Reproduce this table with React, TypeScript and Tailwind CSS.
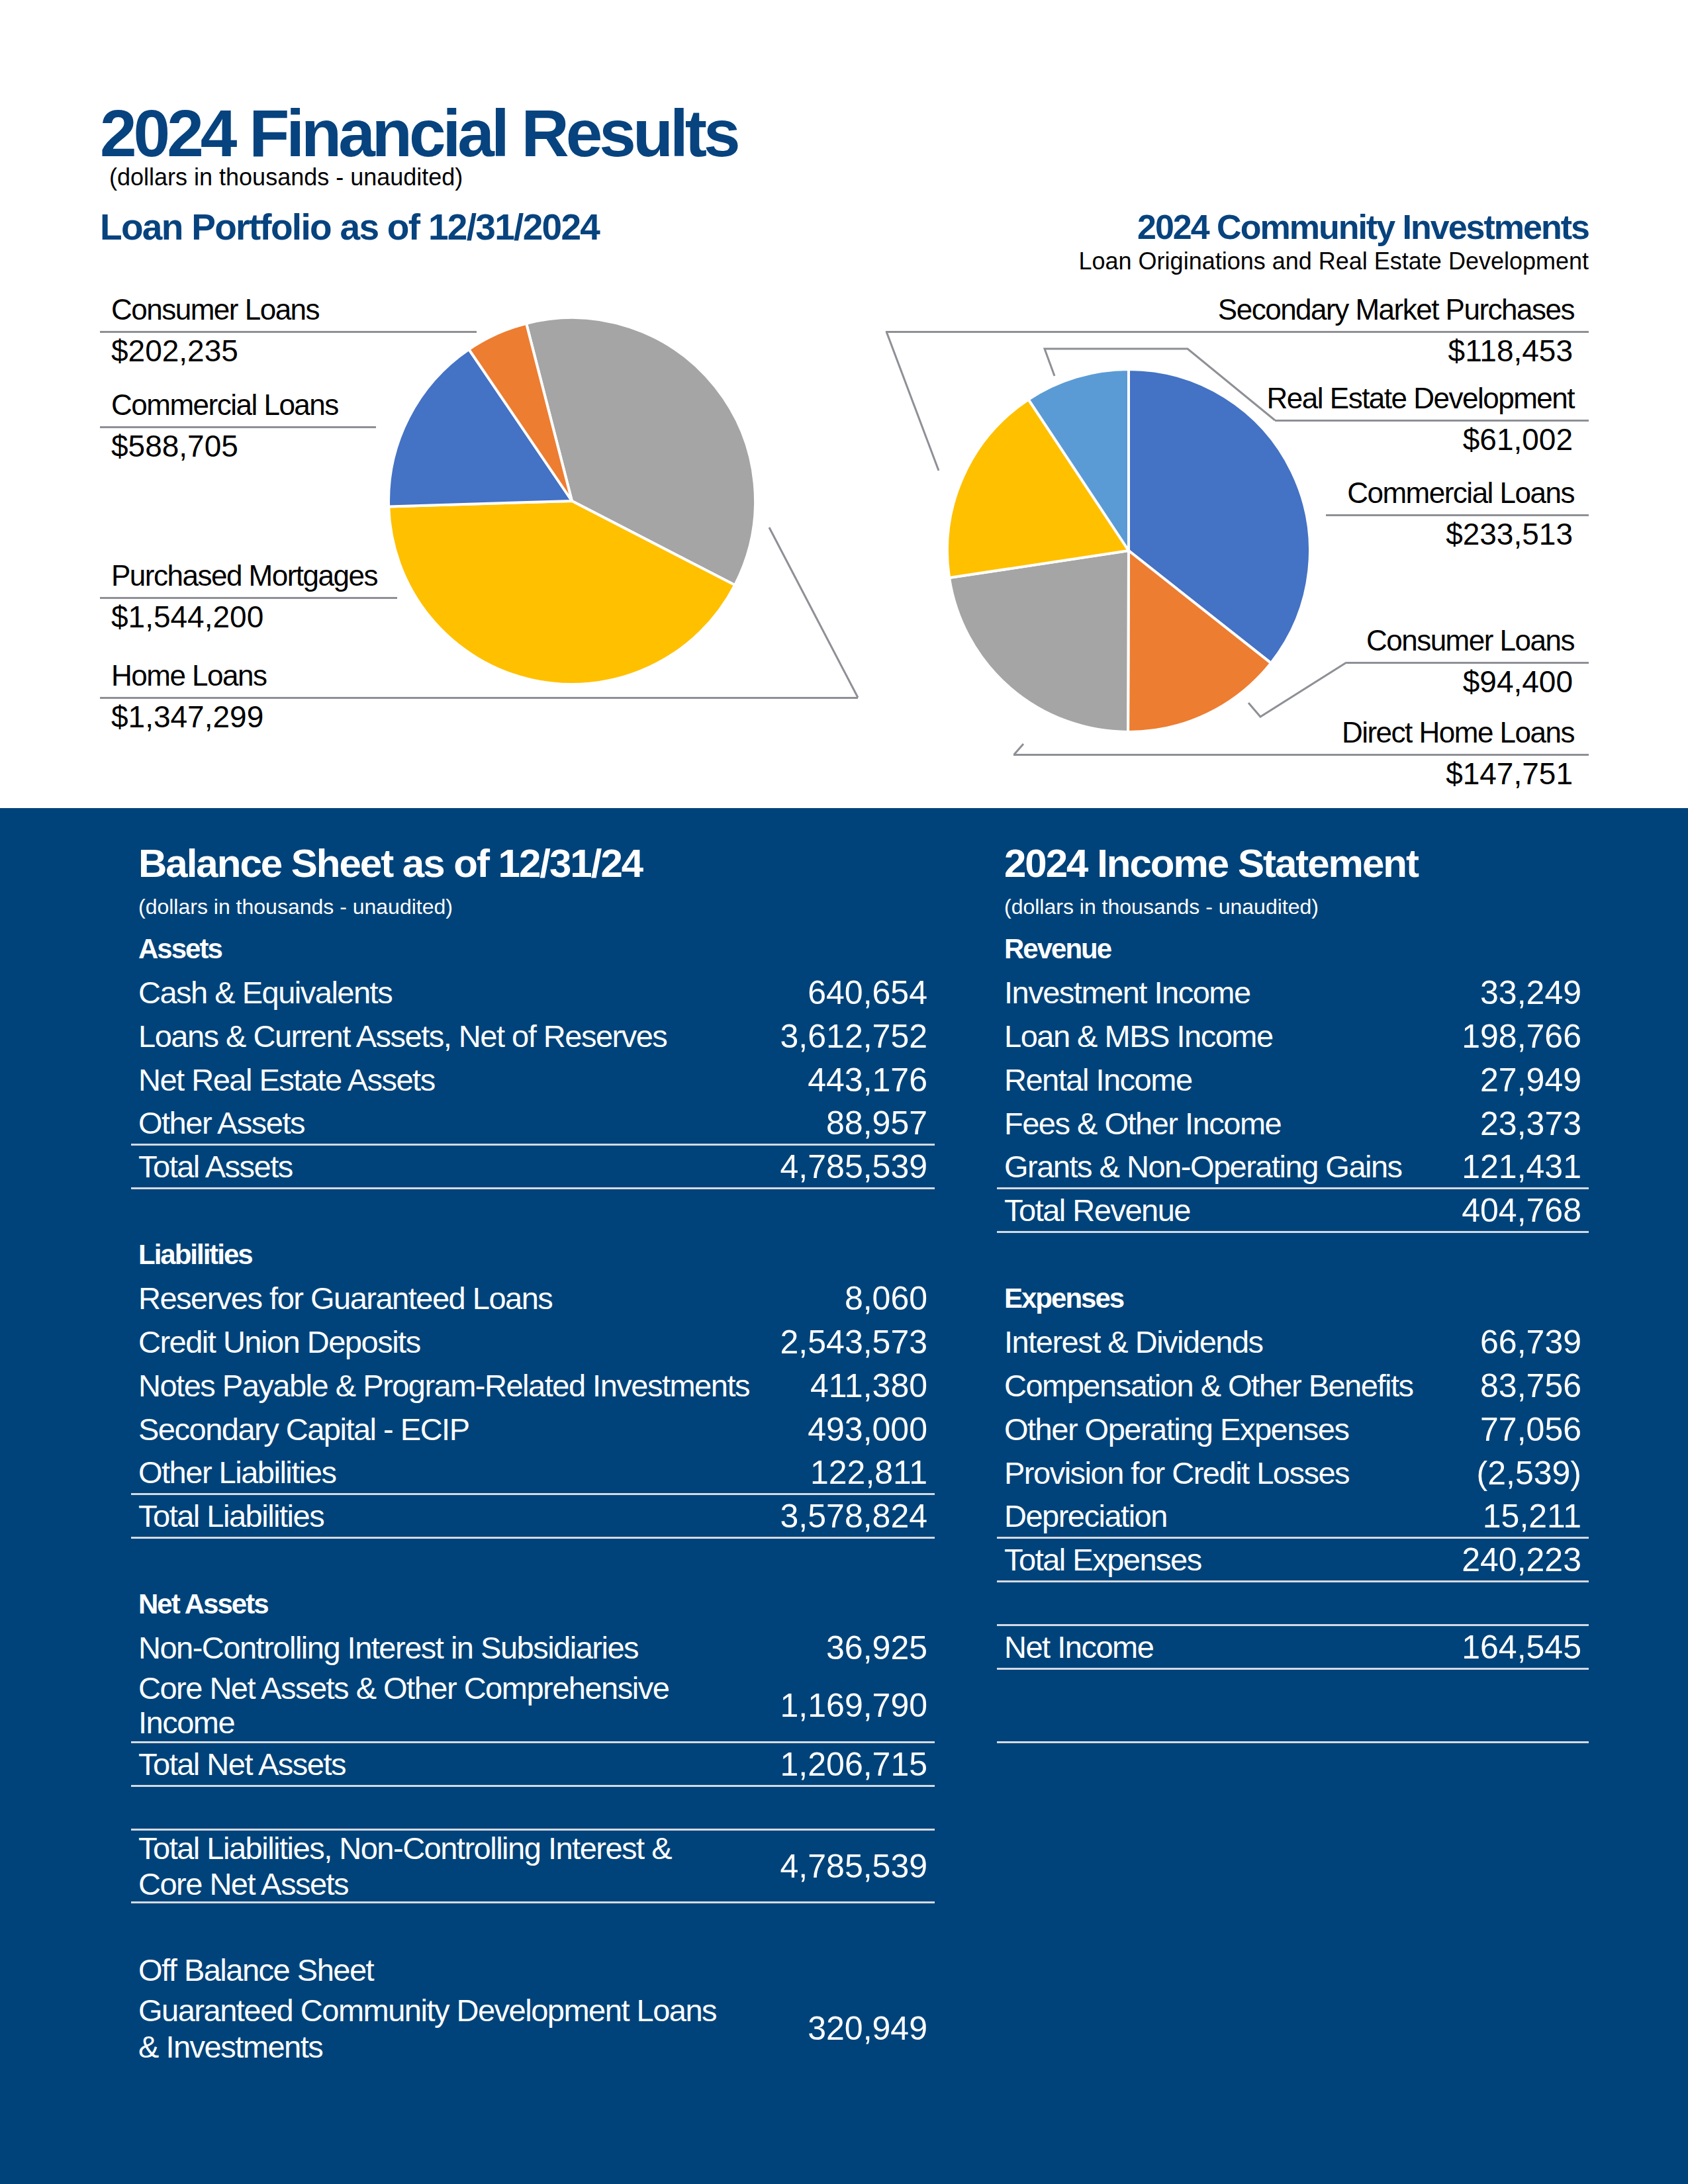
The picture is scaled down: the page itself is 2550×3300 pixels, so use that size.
import clsx from "clsx"

const font = "font-['Liberation_Sans',Arial,sans-serif]"

// angles measured clockwise from 12 o'clock
function slice(cx: number, cy: number, r: number, a0: number, a1: number) {
  const pt = (a: number) => {
    const t = ((a - 90) * Math.PI) / 180
    return `${cx + r * Math.cos(t)} ${cy + r * Math.sin(t)}`
  }
  const large = a1 - a0 > 180 ? 1 : 0
  return `M${cx} ${cy} L${pt(a0)} A${r} ${r} 0 ${large} 1 ${pt(a1)} Z`
}

function pie(cx: number, cy: number, r: number, start: number, parts: { v: number; c: string }[]) {
  const total = parts.reduce((s, p) => s + p.v, 0)
  let a = start
  return parts.map((p, i) => {
    const a0 = a
    a += (p.v / total) * 360
    return <path key={i} d={slice(cx, cy, r, a0, a)} fill={p.c} stroke="#fff" strokeWidth={4} strokeLinejoin="round" />
  })
}

const leftLabels = [
  { name: "Consumer Loans", value: "$202,235", line: "w-[569px]", gap: "mt-0" },
  { name: "Commercial Loans", value: "$588,705", line: "w-[417px]", gap: "mt-[23px]" },
  { name: "Purchased Mortgages", value: "$1,544,200", line: "w-[449px]", gap: "mt-[137px]" },
  { name: "Home Loans", value: "$1,347,299", line: "w-[1145px]", gap: "mt-[30px]" },
]

const rightLabels = [
  { name: "Secondary Market Purchases", value: "$118,453", line: "w-[1062px]", gap: "mt-[19px]" },
  { name: "Real Estate Development", value: "$61,002", line: "w-[474px]", gap: "mt-[13px]" },
  { name: "Commercial Loans", value: "$233,513", line: "w-[397px]", gap: "mt-[22px]" },
  { name: "Consumer Loans", value: "$94,400", line: "w-[366px]", gap: "mt-[102px]" },
  { name: "Direct Home Loans", value: "$147,751", line: "w-[869px]", gap: "mt-[18px]" },
]

const rule = "border-b-[3px] border-[#d5dae3]"

function Row({ label, value, line, bold }: { label?: string; value?: string; line?: boolean; bold?: boolean }) {
  return (
    <div className={clsx("flex h-[66px] items-center justify-between px-[11px]", line && rule)}>
      <span
        className={clsx(
          "whitespace-nowrap leading-[66px]",
          bold ? "text-[42px] font-bold tracking-[-2px]" : "text-[47px] tracking-[-1.5px]"
        )}
      >
        {label}
      </span>
      {value && <span className="text-[50px] leading-[66px]">{value}</span>}
    </div>
  )
}

function TallRow({ lines, value, line, h, lh }: { lines: string[]; value?: string; line?: boolean; h: string; lh: string }) {
  return (
    <div className={clsx("flex items-center justify-between px-[11px]", h, line && rule)}>
      <span className={clsx("text-[47px] tracking-[-1.5px]", lh)}>
        {lines.map((l, i) => (
          <span key={i} className="block whitespace-nowrap">{l}</span>
        ))}
      </span>
      {value && <span className="text-[50px] leading-[66px]">{value}</span>}
    </div>
  )
}

function Heading({ title }: { title: string }) {
  return (
    <>
      <h2 className="px-[11px] text-[60px] font-bold leading-[70px] tracking-[-2px]">{title}</h2>
      <p className="px-[11px] text-[32px] leading-[61px]">(dollars in thousands - unaudited)</p>
    </>
  )
}

export default function App() {
  return (
    <div className={clsx("h-[3300px] w-[2550px] overflow-hidden bg-white text-black", font)}>
      {/* charts */}
      <section className="relative h-[1221px] pl-[151px] pr-[150px]">
        <svg className="pointer-events-none absolute inset-0" width={2550} height={1221} viewBox="0 0 2550 1221">
          {pie(864, 757, 277, -14.41, [
            { v: 1347299, c: "#a5a5a5" },
            { v: 1544200, c: "#ffc000" },
            { v: 588705, c: "#4472c4" },
            { v: 202235, c: "#ed7d31" },
          ])}
          {pie(1705, 832, 274, 0, [
            { v: 233513, c: "#4472c4" },
            { v: 94400, c: "#ed7d31" },
            { v: 147751, c: "#a5a5a5" },
            { v: 118453, c: "#ffc000" },
            { v: 61002, c: "#5b9bd5" },
          ])}
          <g fill="none" stroke="#8e9096" strokeWidth={3}>
            <polyline points="1296,1054 1162,797" />
            <polyline points="1339,501 1418,711" />
            <polyline points="1926,635 1794,527 1578,527 1593,568" />
            <polyline points="2034,1001 1904,1083 1886,1062" />
            <polyline points="1532,1140 1546,1124" />
          </g>
        </svg>

        <h1 className="pt-[151px] text-[100px] font-bold leading-[100px] tracking-[-5px] text-[#07437e]">
          2024 Financial Results
        </h1>
        <p className="pl-[14px] text-[36px] leading-[34px]">(dollars in thousands - unaudited)</p>

        <div className="relative mt-[28px] flex items-start justify-between">
          <div className="flex flex-col">
            <h2 className="text-[55px] font-bold leading-[60px] tracking-[-1.7px] text-[#07437e]">
              Loan Portfolio as of 12/31/2024
            </h2>
            <div className="mt-[63px]">
              {leftLabels.map((l) => (
                <div key={l.name} className={l.gap}>
                  <div className="pl-[17px] text-[44px] leading-[64px] tracking-[-1.5px]">{l.name}</div>
                  <div className={clsx("h-[3px] bg-[#8e9096]", l.line)} />
                  <div className="pl-[17px] text-[46px] leading-[54px]">{l.value}</div>
                </div>
              ))}
            </div>
          </div>

          <div className="flex flex-col items-end text-right">
            <h2 className="text-[52px] font-bold leading-[60px] tracking-[-2px] text-[#07437e]">
              2024 Community Investments
            </h2>
            <p className="text-[36px] leading-[44px]">Loan Originations and Real Estate Development</p>
            {rightLabels.map((l) => (
              <div key={l.name} className={clsx("flex flex-col items-end", l.gap)}>
                <div className="pr-[22px] text-[44px] leading-[64px] tracking-[-1.5px]">{l.name}</div>
                <div className={clsx("h-[3px] bg-[#8e9096]", l.line)} />
                <div className="pr-[24px] text-[46px] leading-[54px]">{l.value}</div>
              </div>
            ))}
          </div>
        </div>
      </section>

      {/* statements */}
      <section className="flex h-[2079px] justify-between bg-[#00437a] pl-[198px] pr-[150px] pt-[49px] text-white">
        <div className="w-[1214px]">
          <Heading title="Balance Sheet as of 12/31/24" />
          <Row label="Assets" bold />
          <Row label="Cash & Equivalents" value="640,654" />
          <Row label="Loans & Current Assets, Net of Reserves" value="3,612,752" />
          <Row label="Net Real Estate Assets" value="443,176" />
          <Row label="Other Assets" value="88,957" line />
          <Row label="Total Assets" value="4,785,539" line />
          <Row />
          <Row label="Liabilities" bold />
          <Row label="Reserves for Guaranteed Loans" value="8,060" />
          <Row label="Credit Union Deposits" value="2,543,573" />
          <Row label="Notes Payable & Program-Related Investments" value="411,380" />
          <Row label="Secondary Capital - ECIP" value="493,000" />
          <Row label="Other Liabilities" value="122,811" line />
          <Row label="Total Liabilities" value="3,578,824" line />
          <Row />
          <Row label="Net Assets" bold />
          <Row label="Non-Controlling Interest in Subsidiaries" value="36,925" />
          <TallRow lines={["Core Net Assets & Other Comprehensive", "Income"]} value="1,169,790" line h="h-[111px]" lh="leading-[52px]" />
          <Row label="Total Net Assets" value="1,206,715" line />
          <Row line />
          <TallRow lines={["Total Liabilities, Non-Controlling Interest &", "Core Net Assets"]} value="4,785,539" line h="h-[110px]" lh="leading-[54px]" />
          <div className="mt-[68px]">
            <Row label="Off Balance Sheet" />
            <TallRow lines={["Guaranteed Community Development Loans", "& Investments"]} value="320,949" h="h-[110px]" lh="leading-[55px]" />
          </div>
        </div>

        <div className="w-[894px]">
          <Heading title="2024 Income Statement" />
          <Row label="Revenue" bold />
          <Row label="Investment Income" value="33,249" />
          <Row label="Loan & MBS Income" value="198,766" />
          <Row label="Rental Income" value="27,949" />
          <Row label="Fees & Other Income" value="23,373" />
          <Row label="Grants & Non-Operating Gains" value="121,431" line />
          <Row label="Total Revenue" value="404,768" line />
          <Row />
          <Row label="Expenses" bold />
          <Row label="Interest & Dividends" value="66,739" />
          <Row label="Compensation & Other Benefits" value="83,756" />
          <Row label="Other Operating Expenses" value="77,056" />
          <Row label="Provision for Credit Losses" value="(2,539)" />
          <Row label="Depreciation" value="15,211" line />
          <Row label="Total Expenses" value="240,223" line />
          <Row line />
          <Row label="Net Income" value="164,545" line />
          <div className={clsx("h-[111px]", rule)} />
        </div>
      </section>
    </div>
  )
}
